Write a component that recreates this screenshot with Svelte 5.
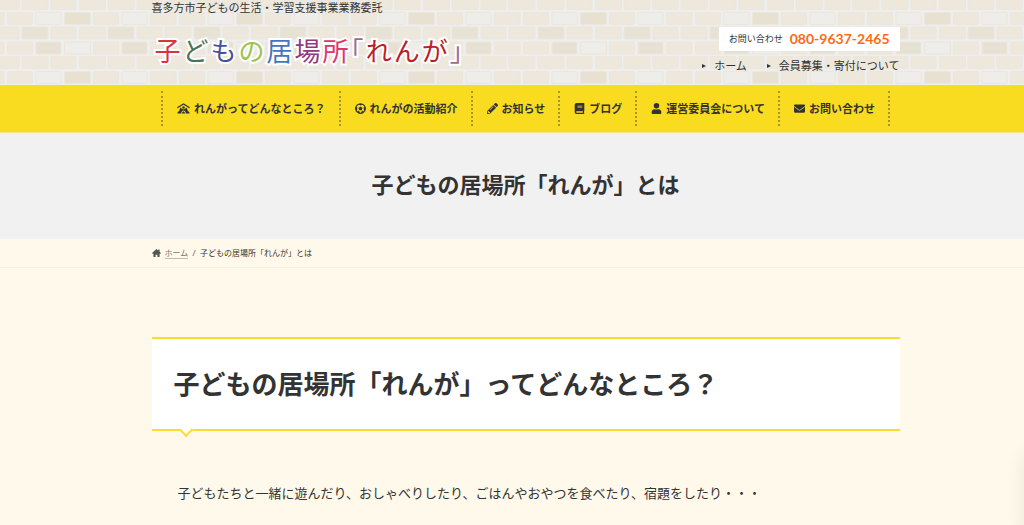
<script>
  const logo = [
    { text: '子', color: 'red' },
    { text: 'ど', color: 'green' },
    { text: 'も', color: 'navy' },
    { text: 'の', color: 'lime' },
    { text: '居', color: 'blue' },
    { text: '場', color: 'purple' },
    { text: '所', color: 'pink' },
    { text: '「', color: 'mauve' },
    { text: 'れ', color: 'crimson' },
    { text: 'ん', color: 'crimson' },
    { text: 'が', color: 'crimson' },
    { text: '」', color: 'mauve' }
  ];

  const subMenu = ['ホーム', '会員募集・寄付について'];

  const nav = [
    { icon: 'house', label: 'れんがってどんなところ？' },
    { icon: 'ball', label: 'れんがの活動紹介' },
    { icon: 'pencil', label: 'お知らせ' },
    { icon: 'book', label: 'ブログ' },
    { icon: 'user', label: '運営委員会について' },
    { icon: 'mail', label: 'お問い合わせ' }
  ];
</script>

<header class="site-header">
  <svg class="bricks" aria-hidden="true">
    <defs>
      <pattern id="brick" width="172" height="59" patternUnits="userSpaceOnUse" y="-3">
        <rect width="172" height="59" fill="#edeeed" />
        <g fill="#ede8db" stroke="#ebe7dd" stroke-width="1">
          <!-- row 1 -->
          <rect x="-7" y="0.5" width="26" height="12" rx="1" />
          <rect x="22" y="0.5" width="26" height="12" rx="1" />
          <rect x="51" y="0.5" width="25" height="12" rx="1" />
          <rect x="79.500" y="0.5" width="26" height="12" rx="1" />
          <rect x="108" y="0.5" width="26" height="12" rx="1" />
          <rect x="137" y="0.5" width="25" height="12" rx="1" />
          <rect x="165" y="0.5" width="26" height="12" rx="1" />
          <!-- row 2 -->
          <rect x="-22" y="15.500" width="26" height="12" rx="1" />
          <rect x="7.500" y="15.500" width="25" height="12" rx="1" />
          <rect x="36" y="15.500" width="25" height="12" rx="1" fill="#eeedea" />
          <rect x="64.500" y="15.500" width="26" height="12" rx="1" fill="#e8e0d1" />
          <rect x="93.500" y="15.500" width="25" height="12" rx="1" />
          <rect x="122" y="15.500" width="25" height="12" rx="1" fill="#eeedea" />
          <rect x="150.500" y="15.500" width="26" height="12" rx="1" />
          <!-- row 3 -->
          <rect x="-7" y="30" width="26" height="12" rx="1" />
          <rect x="22" y="30" width="26" height="12" rx="1" fill="#e8e2d5" />
          <rect x="51" y="30" width="25" height="12" rx="1" />
          <rect x="79.500" y="30" width="26" height="12" rx="1" />
          <rect x="108" y="30" width="26" height="12" rx="1" fill="#e8e2d5" />
          <rect x="137" y="30" width="25" height="12" rx="1" />
          <rect x="165" y="30" width="26" height="12" rx="1" />
          <!-- row 4 -->
          <rect x="-22" y="45" width="26" height="12" rx="1" />
          <rect x="7.500" y="45" width="25" height="12" rx="1" />
          <rect x="36" y="45" width="25" height="12" rx="1" fill="#e6e1d3" />
          <rect x="64.500" y="45" width="26" height="12" rx="1" fill="#eeedea" />
          <rect x="93.500" y="45" width="25" height="12" rx="1" />
          <rect x="122" y="45" width="25" height="12" rx="1" fill="#e6e1d3" />
          <rect x="150.500" y="45" width="26" height="12" rx="1" />
        </g>
      </pattern>
    </defs>
    <rect width="100%" height="100%" fill="url(#brick)" />
  </svg>

  <div class="container header-inner">
    <div class="brand">
      <p class="tagline">喜多方市子どもの生活・学習支援事業業務委託</p>
      <a class="logo" href="#home">
        {#each logo as part}
          <span class={part.color}>{part.text}</span>
        {/each}
      </a>
    </div>
    <div class="header-side">
      <p class="contact">お問い合わせ<a class="tel" href="tel:08096372465">080-9637-2465</a></p>
      <ul class="sub-menu">
        {#each subMenu as label}
          <li><a href="#menu">{label}</a></li>
        {/each}
      </ul>
    </div>
  </div>
</header>

<nav class="global-nav">
  <ul class="container">
    {#each nav as item}
      <li>
        <a href="#page">
          {#if item.icon === 'house'}
            <svg class="wide" viewBox="0 0 26 22">
              <path d="M1.500 9 13 2l11.500 7" fill="none" stroke="currentColor" stroke-width="2.500" stroke-linecap="round" />
              <circle cx="13" cy="9" r="2.500" />
              <path d="M6 10q2-1 3 1l4 2 4-2q1-2 3-1l1 5 4 4v2h-7l-2-5-3-1-3 1-2 5H1v-2l4-4z" />
              <path d="m13 16 4 5H9z" />
            </svg>
          {:else if item.icon === 'ball'}
            <svg viewBox="0 0 22 22">
              <circle cx="11" cy="11" r="9.500" fill="none" stroke="currentColor" stroke-width="2.500" />
              <path d="m11 7 4 3-1.500 4.500h-5L7 10zM7 2h8l-4 3zM1 8l4 1-1 5-3-1zM21 8l-4 1 1 5 3-1zM5 19l1-4 4 3-1 3zM17 19l-1-4-4 3 1 3z" />
            </svg>
          {:else if item.icon === 'pencil'}
            <svg viewBox="0 0 512 512">
              <path d="M498 142l-46 46c-5 5-12 5-17 0L324 77c-5-5-5-12 0-17l46-46c19-19 49-19 68 0l60 60c19 19 19 49 0 68zM284 100 22 362 0 484c-3 16 12 31 28 28l122-21 262-263c5-5 5-12 0-17L301 100c-5-5-12-5-17 0zM124 340c-5-6-5-14 0-20l154-154c6-5 14-5 20 0s5 14 0 20L144 340c-6 5-14 5-20 0zm-36 84h48v36l-65 11-31-30 12-65h36z" />
            </svg>
          {:else if item.icon === 'book'}
            <svg viewBox="0 0 448 512">
              <path d="M448 360V24c0-13-11-24-24-24H96C43 0 0 43 0 96v320c0 53 43 96 96 96h328c13 0 24-11 24-24v-16c0-8-4-14-9-19-4-15-4-59 0-74 5-4 9-11 9-19zM128 134c0-3 3-6 6-6h212c3 0 6 3 6 6v20c0 3-3 6-6 6H134c-3 0-6-3-6-6zm0 64c0-3 3-6 6-6h212c3 0 6 3 6 6v20c0 3-3 6-6 6H134c-3 0-6-3-6-6zm253 250H96c-18 0-32-14-32-32s14-32 32-32h285c-2 17-2 47 0 64z" />
            </svg>
          {:else if item.icon === 'user'}
            <svg viewBox="0 0 448 512">
              <path d="M224 256a128 128 0 1 0 0-256 128 128 0 0 0 0 256zm90 32h-17c-46 21-100 21-146 0h-17C60 288 0 348 0 422v42c0 27 21 48 48 48h352c27 0 48-21 48-48v-42c0-74-60-134-134-134z" />
            </svg>
          {:else}
            <svg viewBox="0 0 512 512">
              <path d="M502 191c4-3 10 0 10 5v204c0 27-21 48-48 48H48c-27 0-48-21-48-48V196c0-5 6-8 10-5 22 17 52 39 154 114 21 15 57 48 92 47 35 1 72-32 92-47 102-75 132-97 154-114zM256 320c23 0 56-29 73-41 133-97 143-105 174-129 6-5 9-12 9-19v-19c0-27-21-48-48-48H48c-27 0-48 21-48 48v19c0 7 3 14 9 19 31 24 41 32 174 129 17 12 50 41 73 41z" />
            </svg>
          {/if}
          {item.label}
        </a>
      </li>
    {/each}
  </ul>
</nav>

<div class="page-header">
  <h1>子どもの居場所「れんが」とは</h1>
</div>

<div class="breadcrumb">
  <ol class="container">
    <li>
      <svg viewBox="0 0 20 18" aria-hidden="true">
        <path d="M10 0 0 9l1 1.500h2V17q0 1 1 1h4v-5h4v5h4q1 0 1-1v-6.500h2L20 9l-3-3V1h-3v2.500z" />
      </svg>
      <a href="#home">ホーム</a>
    </li>
    <li class="slash">/</li>
    <li>子どもの居場所「れんが」とは</li>
  </ol>
</div>

<main>
  <div class="container">
    <h2>子どもの居場所「れんが」ってどんなところ？</h2>
    <p class="lead">子どもたちと一緒に遊んだり、おしゃべりしたり、ごはんやおやつを食べたり、宿題をしたり・・・</p>
  </div>
</main>

<div class="corner-shade"></div>

<style>
  :global(body) {
    background: #fff9ec;
    color: #333;
    font-family: Lato, 'Noto Sans CJK JP', sans-serif;
    font-size: 11px;
    overflow: hidden;
  }

  p,
  h1,
  h2,
  ul,
  ol {
    margin: 0;
    padding: 0;
  }

  ul,
  ol {
    list-style: none;
  }

  a {
    color: inherit;
    text-decoration: none;
  }

  svg {
    fill: currentColor;
  }

  .site-header,
  .global-nav,
  .page-header,
  .breadcrumb,
  main {
    padding-left: 27px;
  }

  .container {
    max-width: 748px;
    margin: 0 auto;
  }

  /* header */
  .site-header {
    position: relative;
    overflow: hidden;
  }

  .bricks {
    position: absolute;
    inset: 0;
    width: 100%;
    height: 100%;
  }

  .header-inner {
    position: relative;
    display: flex;
    justify-content: space-between;
    height: 85px;
  }

  .tagline {
    line-height: 16px;
  }

  .logo {
    display: flex;
    gap: 2px;
    margin: 15px 0 0 3px;
    font-size: 26px;
    line-height: 40px;
    font-feature-settings: 'halt';
    -webkit-text-stroke: 4px #fff;
    paint-order: stroke fill;
  }

  .red { color: #d9333f; }
  .green { color: #4b7358; }
  .navy { color: #4a4f9c; }
  .lime { color: #9dc34c; }
  .blue { color: #4377bd; }
  .purple { color: #91397f; }
  .pink { color: #e0356b; }
  .mauve { color: #a0688f; }
  .crimson { color: #bd1d28; }

  .header-side {
    display: flex;
    flex-direction: column;
    align-items: flex-end;
    padding-top: 27px;
  }

  .contact {
    display: flex;
    align-items: center;
    gap: 7px;
    padding: 0 10px;
    background: #fff;
    border-radius: 1px;
    font-size: 9px;
    line-height: 24px;
  }

  .tel {
    color: #ff6a13;
    font-size: 14px;
    font-weight: bold;
  }

  .sub-menu {
    display: flex;
    gap: 20px;
    margin-top: 7px;
    line-height: 16px;
  }

  .sub-menu li {
    display: flex;
    align-items: center;
    gap: 8px;
  }

  .sub-menu li::before {
    content: '';
    border: 2px solid transparent;
    border-left: 4px solid #333;
    border-right: 0;
  }

  /* navigation */
  .global-nav {
    background: #f9dc1f;
    border-bottom: 1px solid #f3e692;
  }

  .global-nav ul {
    display: flex;
    justify-content: center;
    padding: 6px 0;
  }

  .global-nav li {
    border-right: 2px dotted #a8961c;
  }

  .global-nav li:first-child {
    border-left: 2px dotted #a8961c;
  }

  .global-nav a {
    display: flex;
    align-items: center;
    gap: 4px;
    padding: 0 13px 0 14px;
    font-weight: bold;
    line-height: 35px;
    white-space: nowrap;
  }

  .global-nav svg {
    width: 11px;
    height: 11px;
  }

  .global-nav svg.wide {
    width: 13px;
  }

  /* page title */
  .page-header {
    padding-top: 36px;
    padding-bottom: 38px;
    background: #f1f1f1;
    text-align: center;
  }

  h1 {
    font-size: 22px;
    line-height: 32px;
  }

  .breadcrumb {
    border-bottom: 1px solid #f9f0e4;
    font-size: 8px;
  }

  .breadcrumb ol {
    display: flex;
    align-items: center;
    gap: 4px;
    line-height: 28px;
  }

  .breadcrumb li {
    display: flex;
    align-items: center;
    gap: 4px;
  }

  .breadcrumb svg {
    width: 9px;
    height: 8px;
    color: #555;
  }

  .breadcrumb a {
    color: #777;
    line-height: 10px;
    border-bottom: 1px solid #bbb;
  }

  /* content */
  main {
    padding-top: 69px;
  }

  h2 {
    position: relative;
    padding: 26px 22px;
    background: #fff;
    border-top: 2px solid #f9dc33;
    border-bottom: 2px solid #f9dc33;
    font-size: 26px;
    line-height: 38px;
  }

  h2::after {
    content: '';
    position: absolute;
    left: 29px;
    bottom: -6px;
    width: 8px;
    height: 8px;
    background: #fff;
    border: solid #f9dc33;
    border-width: 0 2px 2px 0;
    transform: rotate(45deg);
  }

  .lead {
    padding: 50px 26px 0;
    font-size: 13px;
    line-height: 24px;
  }

  .corner-shade {
    position: fixed;
    right: -12px;
    bottom: -10px;
    width: 10px;
    height: 80px;
    box-shadow: 0 0 20px rgba(0, 0, 0, 0.12);
  }
</style>
